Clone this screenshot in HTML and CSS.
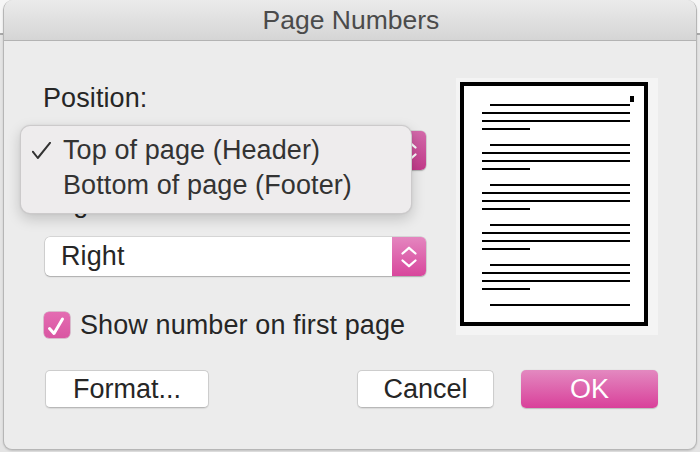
FILE: index.html
```html
<!DOCTYPE html>
<html>
<head>
<meta charset="utf-8">
<link rel="stylesheet" href="styles.css">
</head>
<body>
<div class="dialog">
  <div class="titlebar"><span class="title">Page Numbers</span></div>
  <div class="content">
    <div class="top">
      <div class="left">
        <div class="label">Position:</div>
        <div class="popup">
          <span class="popup-text"></span>
          <span class="stepper dim">
            <svg width="34" height="39" viewBox="0 0 34 39"><polyline points="10.5,16.5 17,10.8 23.5,16.5" class="chev"/><polyline points="10.5,23.5 17,29.2 23.5,23.5" class="chev"/></svg>
          </span>
        </div>
        <div class="label label-2">Alignment:</div>
        <div class="popup popup-2">
          <span class="popup-text">Right</span>
          <span class="stepper">
            <svg width="34" height="39" viewBox="0 0 34 39"><polyline points="10.5,16.5 17,10.8 23.5,16.5" class="chev"/><polyline points="10.5,23.5 17,29.2 23.5,23.5" class="chev"/></svg>
          </span>
        </div>
        <div class="check-row">
          <span class="checkbox">
            <svg width="26" height="26" viewBox="0 0 26 26"><polyline points="5.5,16.5 10,21.5 18.5,7" class="tick"/></svg>
          </span>
          <span class="check-label">Show number on first page</span>
        </div>
      </div>
      <div class="preview">
        <svg width="188" height="244" viewBox="0 0 188 244" shape-rendering="crispEdges">
          <rect x="2" y="2" width="184" height="240" fill="#fff" stroke="#000" stroke-width="4"/>
          <rect x="170" y="14" width="4" height="6" fill="#000"/>
          <g fill="#000">
            <rect x="30" y="22" width="140" height="2"/><rect x="22" y="30" width="148" height="2"/><rect x="22" y="38" width="148" height="2"/><rect x="22" y="46" width="48" height="2"/>
            <rect x="30" y="62" width="140" height="2"/><rect x="22" y="70" width="148" height="2"/><rect x="22" y="78" width="148" height="2"/><rect x="22" y="86" width="48" height="2"/>
            <rect x="30" y="102" width="140" height="2"/><rect x="22" y="110" width="148" height="2"/><rect x="22" y="118" width="148" height="2"/><rect x="22" y="126" width="48" height="2"/>
            <rect x="30" y="142" width="140" height="2"/><rect x="22" y="150" width="148" height="2"/><rect x="22" y="158" width="148" height="2"/><rect x="22" y="166" width="48" height="2"/>
            <rect x="30" y="182" width="140" height="2"/><rect x="22" y="190" width="148" height="2"/><rect x="22" y="198" width="148" height="2"/><rect x="22" y="206" width="48" height="2"/>
            <rect x="30" y="222" width="140" height="2"/>
          </g>
        </svg>
      </div>
    </div>
    <div class="buttons">
      <button class="btn btn-format">Format...</button>
      <span class="spacer"></span>
      <button class="btn btn-cancel">Cancel</button>
      <button class="btn btn-ok">OK</button>
    </div>
  </div>
  <div class="menu">
    <div class="menu-item">
      <span class="menu-check"><svg width="19" height="17" viewBox="0 0 19 17"><polyline points="0.8,9.7 5.8,16 18,0.8" class="mcheck"/></svg></span>
      <span>Top of page (Header)</span>
    </div>
    <div class="menu-item">
      <span class="menu-check"></span>
      <span>Bottom of page (Footer)</span>
    </div>
  </div>
</div>
</body>
</html>
```

FILE: styles.css
```css
* { box-sizing: border-box; }

html, body {
  margin: 0;
  padding: 0;
}

body {
  width: 700px;
  height: 452px;
  overflow: hidden;
  font-family: "Liberation Sans", Arial, sans-serif;
  font-size: 27px;
  letter-spacing: 0.1px;
  color: #262626;
  background: linear-gradient(to bottom, #f6f6f6 0, #f6f6f6 33px, #a9a9a9 33px, #a9a9a9 35px, #e4e4e4 35px);
}

.dialog {
  position: relative;
  margin-left: 3px;
  width: 694px;
  height: 450px;
  background: #ececec;
  border: 1px solid #b6b6b6;
  border-top: none;
  border-radius: 10px 10px 9px 9px;
  overflow: hidden;
  box-shadow: 0 1px 2px rgba(0,0,0,0.15);
}

.titlebar {
  height: 41px;
  display: flex;
  align-items: center;
  justify-content: center;
  background: linear-gradient(to bottom, #ebebeb, #d5d5d5);
  border-bottom: 1px solid #b3b3b3;
}

.title {
  color: #4b4b4b;
  font-size: 26.5px;
  letter-spacing: 0;
  line-height: 30px;
  padding-left: 2px;
}

.content {
  padding: 37px 38px 0 40px;
}

.top {
  display: flex;
  align-items: flex-start;
}

.left {
  width: 382px;
  margin-top: 5px;
  display: flex;
  flex-direction: column;
}

.label {
  line-height: 30px;
  height: 30px;
  margin-left: -1px;
}

.label-2 {
  margin-top: 18px;
}

.popup {
  margin-top: 18px;
  margin-left: 1px;
  height: 39px;
  width: 381px;
  display: flex;
  align-items: stretch;
  background: #fff;
  border-radius: 5px;
  box-shadow: 0 0 0 0.5px rgba(0,0,0,0.18), 0 1px 1.5px rgba(0,0,0,0.2);
  overflow: hidden;
}

.popup-2 {
  margin-top: 19px;
}

.popup-text {
  flex: 1;
  padding-left: 16px;
  line-height: 39px;
  color: #262626;
}

.stepper {
  width: 34px;
  display: flex;
  background: linear-gradient(to bottom, #e486bf, #d8469c);
}

.stepper.dim {
  background: linear-gradient(to bottom, #d36aaa, #c23a8a);
}

.chev {
  fill: none;
  stroke: #fff;
  stroke-width: 2.3;
  stroke-linecap: round;
  stroke-linejoin: round;
}

.check-row {
  margin-top: 34px;
  height: 30px;
  display: flex;
  align-items: center;
}

.checkbox {
  width: 26px;
  height: 26px;
  border-radius: 5px;
  background: linear-gradient(to bottom, #e46cb2, #d956a2);
  box-shadow: 0 0 0 0.5px rgba(160,40,110,0.5);
  display: flex;
}

.tick {
  fill: none;
  stroke: #fff;
  stroke-width: 3;
  stroke-linecap: round;
  stroke-linejoin: round;
}

.check-label {
  margin-left: 10px;
  line-height: 30px;
}

.preview {
  margin-left: 30px;
  padding: 4px 10px 9px 4px;
  background: #f4f4f4;
  display: flex;
}

.preview svg {
  display: block;
}

.buttons {
  margin-top: 30px;
  display: flex;
  align-items: center;
}

.spacer {
  flex: 1;
}

.btn {
  font-family: "Liberation Sans", Arial, sans-serif;
  font-size: 27px;
  color: #262626;
  height: 38px;
  padding: 0;
  line-height: 36px;
  background: #fff;
  border: 1px solid #cdcdcd;
  border-bottom-color: #b8b8b8;
  border-radius: 5px;
  box-shadow: 0 1px 1px rgba(0,0,0,0.08);
}

.btn-format {
  margin-left: 1px;
  width: 164px;
}

.btn-cancel {
  width: 137px;
}

.btn-ok {
  margin-left: 27px;
  width: 137px;
  color: #fff;
  border: none;
  line-height: 38px;
  background: linear-gradient(to bottom, #e389c0, #d9409a);
  box-shadow: 0 0.5px 1px rgba(0,0,0,0.2);
}

.menu {
  position: absolute;
  left: 16px;
  top: 125px;
  width: 392px;
  height: 89px;
  padding: 7px 0 0 11px;
  background: #eeeced;
  border: 1px solid rgba(0,0,0,0.14);
  border-radius: 10px;
  box-shadow: 0 5px 14px rgba(0,0,0,0.18), 0 0 2px rgba(0,0,0,0.08);
  color: #333;
}

.menu-item {
  display: flex;
  align-items: center;
  height: 35px;
  line-height: 35px;
}

.menu-check {
  width: 19px;
  height: 17px;
  margin-right: 12px;
  display: flex;
}

.mcheck {
  fill: none;
  stroke: #333;
  stroke-width: 2;
  stroke-linecap: round;
  stroke-linejoin: round;
}
```
